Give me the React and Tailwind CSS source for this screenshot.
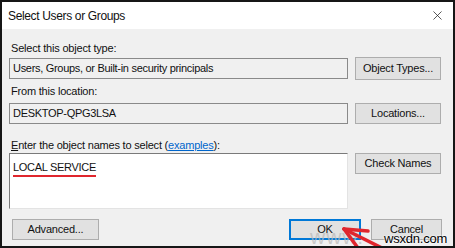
import { X } from 'lucide-react';

function Btn({ children, className = '' }) {
  return (
    <div className={`h-[21px] flex items-center justify-center bg-[#e1e1e1] border border-[#adadad] text-[11px] text-[#111] ${className}`}>
      {children}
    </div>
  );
}

export default function App() {
  return (
    <div className="w-[455px] h-[248px] border-2 border-[#161616] flex flex-col relative overflow-hidden font-['Liberation_Sans',Arial,sans-serif] text-[#111] tracking-[-0.2px]">
      <div className="h-[27px] bg-white flex items-center justify-between pl-[6px] pr-[8px] shrink-0">
        <span className="text-[12px] tracking-[-0.35px]">Select Users or Groups</span>
        <X className="w-[15px] h-[15px] text-[#222]" strokeWidth={1.2} />
      </div>

      <div className="flex-1 bg-[#f0f0f0] pl-[7px] pr-[12px]">
        <div className="mt-[13px] text-[11px] leading-[13px] pl-[2px]">Select this object type:</div>
        <div className="mt-[2px] h-[23px] flex items-center gap-[7px]">
          <div className="w-[339px] h-[21px] border border-[#8a8a8a] bg-[#f0f0f0] flex items-center pl-[3px] text-[11px] tracking-[-0.3px]">
            Users, Groups, or Built-in security principals
          </div>
          <Btn className="w-[86px] h-[23px]">Object Types...</Btn>
        </div>

        <div className="mt-[5px] text-[11px] leading-[13px] pl-[2px]">From this location:</div>
        <div className="mt-[4px] h-[22px] flex items-center gap-[7px]">
          <div className="w-[339px] h-[21px] border border-[#8a8a8a] bg-[#f0f0f0] flex items-center pl-[3px] text-[11px] tracking-[-0.3px]">
            DESKTOP-QPG3LSA
          </div>
          <Btn className="w-[86px]">Locations...</Btn>
        </div>

        <div className="mt-[15px] text-[11px] leading-[13px] pl-[2px]">
          <span className="underline">E</span>nter the object names to select (<span className="text-[#0066cc] underline">examples</span>):
        </div>
        <div className="mt-[1px] flex items-start gap-[7px]">
          <div className="w-[339px] h-[56px] bg-white border border-[#e3e3e3] border-t-[#7a7a7a] border-l-[#7a7a7a] pl-[3px] pt-[5px] text-[11px] tracking-[-0.3px]">
            <span className="inline-block border-b-2 border-[#e0262d] pb-[2px] leading-[12px]">LOCAL SERVICE</span>
          </div>
          <Btn className="w-[86px]">Check Names</Btn>
        </div>

        <div className="mt-[10px] flex items-center">
          <Btn className="ml-[3px] w-[87px]">Advanced...</Btn>
          <div className="flex-1" />
          <div className="w-[72px] h-[21px] flex items-center justify-center bg-[#e1e1e1] border-2 border-[#0078d7] text-[11px]">OK</div>
          <Btn className="ml-[10px] w-[71px] mr-[-1px]">Cancel</Btn>
        </div>
      </div>

      <div className="absolute left-[308px] top-[224px] text-[21px] leading-[21px] text-[#b8b8b8]/70 tracking-[1px]">www.</div>
      <div className="absolute left-[382px] top-[229px] text-[13px] leading-[16px] text-black [text-shadow:0_0_2px_#fff,0_0_2px_#fff]">wsxdn.com</div>

      <svg className="absolute left-0 top-0 pointer-events-none" width="455" height="248" viewBox="0 0 455 248">
        <g stroke="#e0262d" strokeWidth="3.5" strokeLinecap="round" fill="none">
          <line x1="342" y1="227" x2="392" y2="252" />
          <line x1="342" y1="227" x2="366" y2="229" />
          <line x1="342" y1="227" x2="356" y2="246" />
        </g>
      </svg>
    </div>
  );
}
